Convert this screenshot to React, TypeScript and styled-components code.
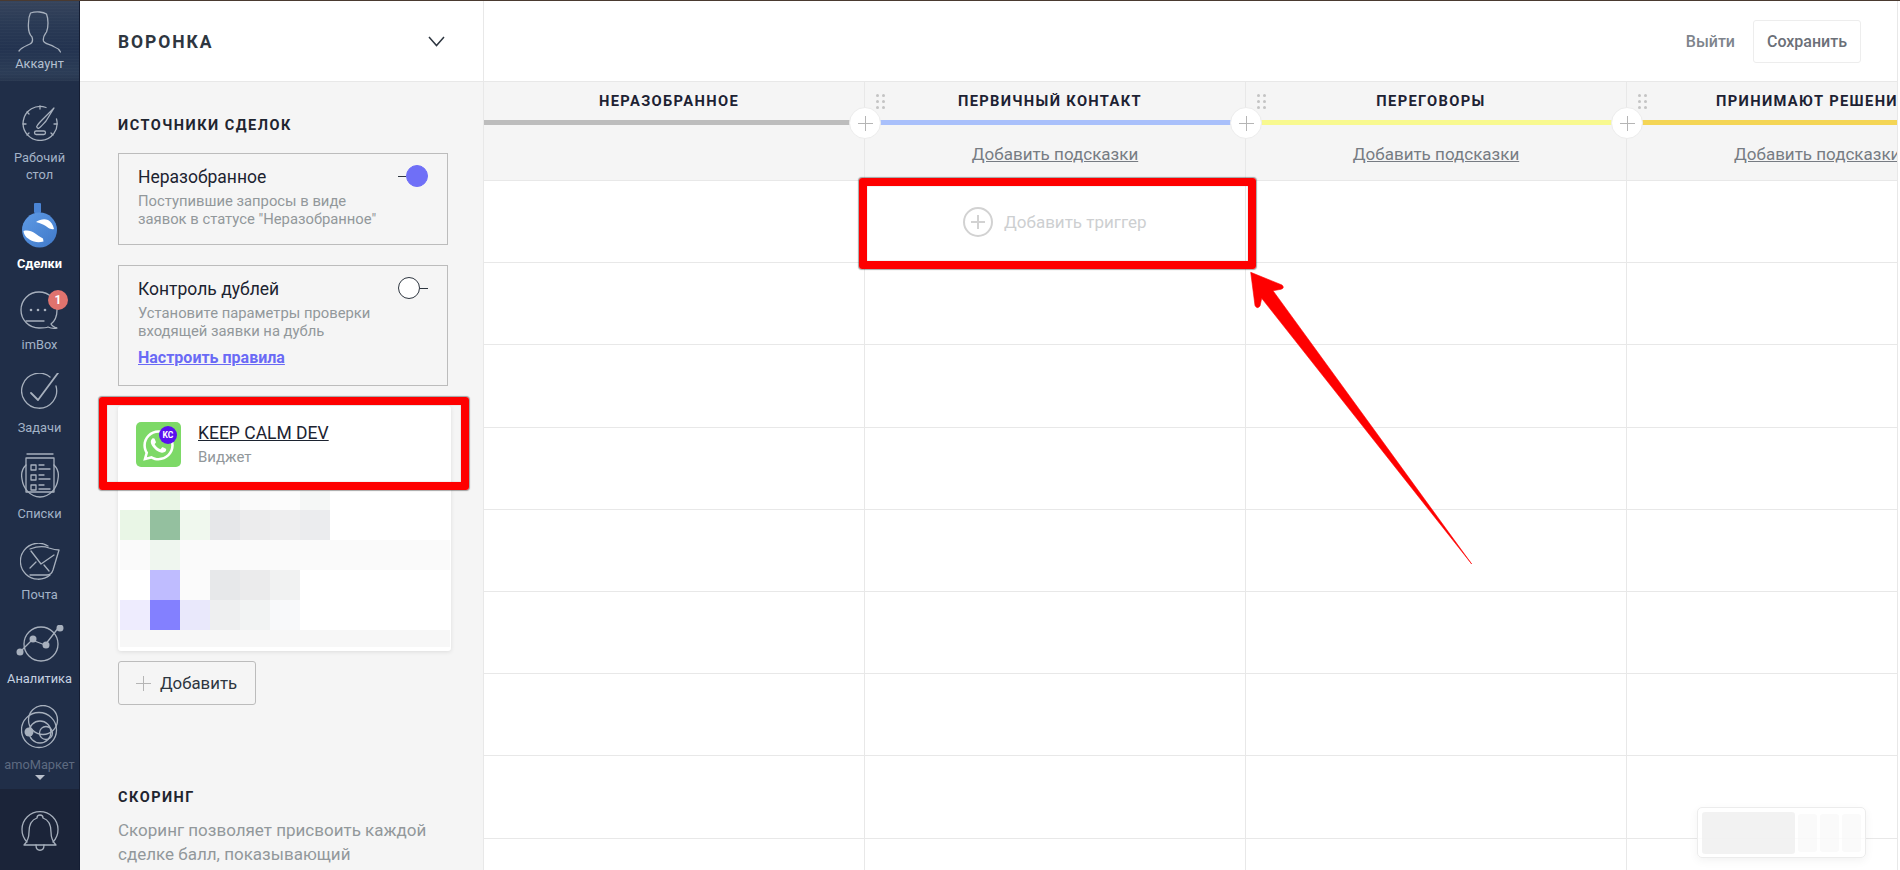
import styled, { createGlobalStyle } from 'styled-components';
import { FaWhatsapp } from 'react-icons/fa';

const FONT = `Roboto, "Noto Sans", "Liberation Sans", sans-serif`;

const GlobalStyle = createGlobalStyle`
  html, body {
    margin: 0;
    padding: 0;
    background: #fff;
  }
  body {
    font-family: ${FONT};
    width: 1900px;
    height: 870px;
    overflow: hidden;
  }
  * {
    box-sizing: border-box;
  }
`;

const Page = styled.div`
  position: relative;
  width: 1900px;
  height: 870px;
  overflow: hidden;
  display: flex;
  border-top: 1px solid #4a3a30;
`;

/* left nav */
const Sidebar = styled.nav`
  width: 80px;
  flex: none;
  display: flex;
  flex-direction: column;
  background: #202e48;
  border-right: 1px solid #141d33;
`;

const Account = styled.div`
  height: 80px;
  padding-top: 10px;
  display: flex;
  flex-direction: column;
  align-items: center;
  background:
    repeating-linear-gradient(0deg, rgba(255, 255, 255, 0.02) 0 1px, transparent 1px 3px),
    linear-gradient(#36445c 0, #2a3a55 28%, #233350 60%, #2c3d57 90%, #27364f 100%);
`;

const Nav = styled.div`
  flex: 1;
  padding-top: 24px;
  display: flex;
  flex-direction: column;
`;

const NavItem = styled.div<{ $h: number }>`
  position: relative;
  height: ${(p) => p.$h}px;
  display: flex;
  flex-direction: column;
  align-items: center;
`;

const NavLabel = styled.span<{ $gap: number; $active?: boolean; $tone?: string }>`
  margin-top: ${(p) => p.$gap}px;
  font-size: 12.8px;
  line-height: 17px;
  text-align: center;
  color: ${(p) => (p.$active ? '#fff' : p.$tone || '#a3b3c7')};
  font-weight: ${(p) => (p.$active ? 700 : 400)};
`;

const Badge = styled.span`
  position: absolute;
  left: 48px;
  top: -1px;
  width: 20px;
  height: 20px;
  border-radius: 50%;
  background: #e0736e;
  color: #fff;
  font-size: 12px;
  font-weight: 700;
  line-height: 20px;
  text-align: center;
`;

const MoreCaret = styled.span`
  width: 0;
  height: 0;
  margin-top: 2px;
  border-left: 5.5px solid transparent;
  border-right: 5.5px solid transparent;
  border-top: 5px solid #b9c0cc;
`;

const BellBox = styled.div`
  height: 81px;
  padding-top: 18px;
  display: flex;
  justify-content: center;
  background: #1b2439;
`;

/* settings panel */
const Panel = styled.aside`
  width: 404px;
  flex: none;
  background: #f5f5f5;
  border-right: 1px solid #e8e8e8;
  overflow: hidden;
`;

const PanelHead = styled.header`
  height: 81px;
  padding: 0 38px;
  display: flex;
  align-items: center;
  justify-content: space-between;
  background: #fff;
  border-bottom: 1px solid #e8e8e8;
`;

const PanelTitle = styled.h1`
  margin: 2px 0 0;
  font-size: 17.5px;
  font-weight: 700;
  letter-spacing: 1.9px;
  color: #2e3640;
`;

const PanelBody = styled.div`
  padding: 34px 32px 0 38px;
`;

const SectionTitle = styled.h2`
  margin: 0;
  font-size: 14.5px;
  line-height: 20px;
  font-weight: 700;
  letter-spacing: 1.5px;
  color: #1f2530;
`;

const SourceCard = styled.section<{ $h: number; $mt: number }>`
  position: relative;
  width: 330px;
  height: ${(p) => p.$h}px;
  margin-top: ${(p) => p.$mt}px;
  padding: 11px 19px;
  border: 1px solid #bcbcbc;
`;

const CardTitle = styled.div`
  font-size: 17.5px;
  line-height: 24px;
  color: #1c2330;
`;

const CardText = styled.p`
  margin: 4px 0 0;
  font-size: 14.8px;
  line-height: 17.5px;
  color: #92989b;
`;

const RuleLink = styled.a`
  display: block;
  margin-top: 8px;
  font-size: 16px;
  line-height: 20px;
  font-weight: 700;
  color: #6a6af5;
  text-decoration: underline;
`;

const Toggle = styled.span<{ $on?: boolean }>`
  position: absolute;
  top: 12px;
  right: 19px;
  width: 30px;
  height: 20px;
  display: flex;
  flex-direction: ${(p) => (p.$on ? 'row' : 'row-reverse')};
  align-items: center;
  &::before {
    content: '';
    flex: 1;
    height: 1px;
    background: #2e3640;
  }
  &::after {
    content: '';
    width: 20px;
    height: 20px;
    border-radius: 50%;
    background: ${(p) => (p.$on ? '#6f6ff7' : '#fff')};
    border: 1px solid ${(p) => (p.$on ? '#6f6ff7' : '#2e3640')};
  }
`;

const WidgetCard = styled.div`
  width: 333px;
  margin-top: 20px;
  background: #fff;
  border-radius: 3px;
  box-shadow: 0 1px 4px rgba(0, 0, 0, 0.1);
`;

const WidgetRow = styled.div`
  height: 85px;
  padding: 16px 18px;
  display: flex;
  gap: 17px;
`;

const WidgetIcon = styled.div`
  position: relative;
  width: 45px;
  height: 45px;
  flex: none;
  padding-top: 2px;
  border-radius: 5px;
  background: #7dd967;
  display: flex;
  align-items: center;
  justify-content: center;
  color: #fff;
`;

const KcBadge = styled.span`
  position: absolute;
  top: 4px;
  right: 4px;
  width: 18px;
  height: 18px;
  border-radius: 50%;
  background: #5a10f0;
  color: #fff;
  font-size: 8.5px;
  font-weight: 700;
  line-height: 18px;
  text-align: center;
`;

const WidgetName = styled.a`
  display: block;
  margin-top: 0;
  font-size: 17.5px;
  line-height: 22px;
  color: #1c2330;
  text-decoration: underline;
`;

const WidgetKind = styled.div`
  margin-top: 4px;
  font-size: 15px;
  line-height: 18px;
  color: #92989b;
`;

const Mosaic = styled.div`
  padding: 0 1px 4px 2px;
  display: flex;
  flex-direction: column;
`;

const MosaicRow = styled.div<{ $h: number; $bg?: string }>`
  height: ${(p) => p.$h}px;
  display: flex;
  background: ${(p) => p.$bg || '#fff'};
`;

const Tile = styled.span<{ $c: string }>`
  width: 30px;
  flex: none;
  background: ${(p) => p.$c};
`;

const AddButton = styled.button`
  width: 138px;
  height: 44px;
  margin-top: 10px;
  padding: 0 0 0 17px;
  display: flex;
  align-items: center;
  gap: 9px;
  background: transparent;
  border: 1px solid #bcbcbc;
  border-radius: 3px;
  font-family: ${FONT};
  font-size: 16.8px;
  color: #2e3640;
`;

const ScoringTitle = styled(SectionTitle)`
  margin-top: 83px;
`;

const ScoringText = styled.p`
  margin: 10px 0 0;
  font-size: 17px;
  line-height: 24px;
  color: #92989b;
`;

/* pipeline board */
const Main = styled.main`
  width: 1414px;
  flex: none;
  overflow: hidden;
  border-right: 1px solid #e8e8e8;
`;

const TopBar = styled.header`
  height: 81px;
  padding: 0 36px 0 0;
  display: flex;
  align-items: center;
  justify-content: flex-end;
  gap: 18px;
  border-bottom: 1px solid #e8e8e8;
`;

const ExitLink = styled.span`
  font-size: 16px;
  font-weight: 500;
  color: #7e848c;
`;

const SaveButton = styled.button`
  width: 108px;
  height: 43px;
  background: #fff;
  border: 1px solid #ededed;
  border-radius: 3px;
  font-family: ${FONT};
  font-size: 16px;
  font-weight: 500;
  color: #6b7078;
`;

const Board = styled.div`
  display: grid;
  grid-template-columns: 380px 381px 381px 272px;
`;

const Column = styled.div<{ $first?: boolean }>`
  position: relative;
  min-width: 0;
  border-left: ${(p) => (p.$first ? 'none' : '1px solid #e8e8e8')};
`;

const StageHead = styled.div`
  position: relative;
  height: 99px;
  background: #f5f5f5;
  border-bottom: 1px solid #e8e8e8;
`;

const StageTitle = styled.div<{ $clip?: boolean }>`
  height: 38px;
  padding-right: 10px;
  line-height: 38px;
  font-size: 14.7px;
  font-weight: 700;
  letter-spacing: 1.35px;
  color: #1d2233;
  text-align: center;
  white-space: nowrap;
  ${(p) => p.$clip && 'text-align: left; padding-left: 89px; padding-right: 0; overflow: hidden;'}
`;

const StageBar = styled.div<{ $c: string }>`
  height: 5px;
  background: ${(p) => p.$c};
`;

const HintLink = styled.a<{ $clip?: boolean }>`
  display: block;
  margin-top: 18px;
  font-size: 17px;
  line-height: 22px;
  color: #777c83;
  text-align: center;
  white-space: nowrap;
  overflow: hidden;
  ${(p) => p.$clip && 'text-align: left; padding-left: 107px;'}
  span {
    text-decoration: underline;
  }
`;

const DragDots = styled.div`
  position: absolute;
  left: 11px;
  top: 12px;
  display: grid;
  grid-template-columns: 3px 3px;
  gap: 3px;
  i {
    width: 3px;
    height: 3px;
    border-radius: 50%;
    background: #c4c4c4;
  }
`;

const InsertStage = styled.button`
  position: absolute;
  left: -16px;
  top: 25px;
  z-index: 2;
  width: 32px;
  height: 32px;
  padding: 0;
  display: flex;
  align-items: center;
  justify-content: center;
  border-radius: 50%;
  border: 1px solid #ececec;
  background: #fff;
`;

const Row = styled.div`
  height: 82.2px;
  border-bottom: 1px solid #e8e8e8;
`;

const TriggerRow = styled(Row)`
  display: flex;
  align-items: center;
  gap: 11px;
  padding-left: 98px;
  font-size: 17px;
  color: #cdcfd1;
`;

const TriggerPlus = styled.span`
  width: 30px;
  height: 30px;
  flex: none;
  display: flex;
  align-items: center;
  justify-content: center;
  border: 2px solid #d2d2d2;
  border-radius: 50%;
`;

/* screenshot annotations */
const RedFrame = styled.div<{ $x: number; $y: number; $w: number; $h: number }>`
  position: absolute;
  left: ${(p) => p.$x}px;
  top: ${(p) => p.$y}px;
  width: ${(p) => p.$w}px;
  height: ${(p) => p.$h}px;
  border: 8px solid #fe0000;
  border-radius: 3px;
  box-shadow: 0 0 1px 1px rgba(60, 60, 60, 0.45), inset 0 0 1px rgba(60, 60, 60, 0.6);
  z-index: 5;
`;

const Arrow = styled.svg`
  position: absolute;
  left: 0;
  top: 0;
  z-index: 5;
  pointer-events: none;
`;

const FloatBar = styled.div`
  position: absolute;
  left: 1697px;
  top: 806px;
  width: 169px;
  height: 51px;
  padding: 4px;
  display: flex;
  align-items: center;
  gap: 3px;
  background: rgba(255, 255, 255, 0.82);
  border: 1px solid #ececec;
  border-radius: 5px;
  box-shadow: 0 3px 10px rgba(0, 0, 0, 0.05);
  z-index: 4;
`;

const FloatWide = styled.span`
  width: 94px;
  height: 42px;
  border-radius: 3px;
  background: rgba(238, 238, 238, 0.75);
`;

const FloatCell = styled.span`
  width: 19px;
  height: 38px;
  border-radius: 3px;
  background: rgba(245, 245, 245, 0.5);
`;

const ICON = { fill: 'none', stroke: '#a7b0bd', strokeWidth: 1.3, strokeLinecap: 'round', strokeLinejoin: 'round' } as const;

const AccountIcon = () => (
  <svg width="46" height="42" viewBox="0 0 46 42" {...ICON}>
    <path d="M2 40c3-4 7-5 11-7 3-1.500 3-4 2-7-3-3-4-8-3.500-14 0-4 1-8 2-10 6-2 13-1 16 1 2 5 2 13 0 18-2 3-4 5-3 9 1 3 6 3 11 6 3 1 5 3 6 5" />
  </svg>
);

const DashboardIcon = () => (
  <svg width="36" height="36" viewBox="0 0 36 36" {...ICON}>
    <path d="M24 2.500A17 17 0 1 0 34.500 14" />
    <path d="M18 1v3M5 7l2 2M1 19h3M32 19h3M5 30l2-2M31 30l-2-2" />
    <path d="M32 3 21 14c-2 2-5 5-6 7-1 1 1 3 2 2 2-1 5-5 7-7z" />
    <rect x="12.500" y="26" width="11" height="3.500" rx="1.700" />
  </svg>
);

const DealsIcon = () => (
  <svg width="36" height="46" viewBox="0 0 36 46">
    <defs>
      <linearGradient id="bag" x1="0" y1="0" x2="1" y2="1">
        <stop offset="0" stopColor="#5f9be6" />
        <stop offset="1" stopColor="#3f78c8" />
      </linearGradient>
    </defs>
    <rect x="12" y="0" width="7" height="10" rx="1" fill="#4a84d4" />
    <circle cx="17.500" cy="27" r="17.500" fill="url(#bag)" />
    <path d="M14 19C18 16.500 22 15.500 26 17c3 1.500 5 4.500 6 9-2 .5-4 0-5.500-1-2-1.500-3.500-2.500-5.500-3.500-2.500-1-5-2-7-2.500z" fill="#fff" />
    <path d="M1.500 28C6 27 9.500 28 12.500 30c3 2 5.500 4 8.500 5.500l.5 3C18 39.500 15 39.500 12 38.500 6 36.500 2 33 1.500 28z" fill="#fff" />
  </svg>
);

const ChatIcon = () => (
  <svg width="40" height="40" viewBox="0 0 40 40" {...ICON}>
    <path d="M31 33c4-3 6-8 6-14C37 9 29 1 19 1S1 9 1 19s8 18 18 18c3 0 7 0 9-1 2 1 5 2 9 1-3-1-5-2-6-4z" />
    <path d="M6 30h18" />
    <circle cx="11" cy="19" r="1.300" fill="#a7b0bd" stroke="none" />
    <circle cx="18" cy="19" r="1.300" fill="#a7b0bd" stroke="none" />
    <circle cx="25" cy="19" r="1.300" fill="#a7b0bd" stroke="none" />
  </svg>
);

const TaskIcon = () => (
  <svg width="38" height="38" viewBox="0 0 38 38" {...ICON}>
    <path d="M29 4a17.500 17.500 0 1 0 6 9" />
    <path d="M10 20l7 7L37 0" strokeWidth="1.800" />
  </svg>
);

const ListIcon = () => (
  <svg width="38" height="46" viewBox="0 0 38 46" {...ICON}>
    <path d="M6 1h26" />
    <path d="M5 12C1 16 0 21 1 26c1 9 8 18 18 18s17-9 18-18c1-5 0-10-4-14" />
    <path d="M5 5h28v34H5z" />
    <rect x="10" y="12" width="5" height="5" />
    <rect x="10" y="22" width="5" height="5" />
    <rect x="10" y="32" width="5" height="5" />
    <path d="M18 12h5M18 16h11M18 22h5M18 26h11M18 32h5M18 36h11" />
  </svg>
);

const MailIcon = () => (
  <svg width="40" height="37" viewBox="0 0 40 37" {...ICON}>
    <path d="M28 3a18 18 0 1 0 2 29" />
    <path d="M10 6c8-3 14-3 19-1 3 1 7 2 10 2L33 27c-1 3-3 5-6 5H10" />
    <path d="M11 8l10 13L34 12" />
    <path d="M10 25l6-6M29 28l-5-6" />
  </svg>
);

const ChartIcon = () => (
  <svg width="48" height="38" viewBox="0 0 48 38" {...ICON}>
    <circle cx="25" cy="19" r="17" />
    <path d="M4 27l12-12 13 5 14-18" />
    <circle cx="4" cy="27" r="3.500" fill="#a7b0bd" stroke="none" />
    <circle cx="17" cy="14" r="3.500" fill="#a7b0bd" stroke="none" />
    <circle cx="30" cy="20" r="3.500" fill="#a7b0bd" stroke="none" />
    <circle cx="44" cy="3" r="3.500" fill="#a7b0bd" stroke="none" />
  </svg>
);

const MarketIcon = () => (
  <svg width="38" height="44" viewBox="0 0 38 44" {...ICON}>
    <circle cx="22" cy="15" r="14.500" />
    <circle cx="18" cy="25" r="17.500" />
    <circle cx="19" cy="27" r="11" />
    <circle cx="25" cy="28" r="6.500" />
    <circle cx="8" cy="27" r="4.500" fill="#a7b0bd" stroke="none" />
  </svg>
);

const BellIcon = () => (
  <svg width="38" height="46" viewBox="0 0 38 46" {...ICON}>
    <path d="M6 35a18 18 0 1 1 26 0" />
    <path d="M19 8a3 3 0 0 1 3 3c6 2 8 7 8 14 0 5 2 10 5 13H3c3-3 5-8 5-13 0-7 2-12 8-14a3 3 0 0 1 3-3z" />
    <path d="M15 38c0 7 8 7 8 0" />
  </svg>
);

const PlusMark = ({ size, color, width = 1 }: { size: number; color: string; width?: number }) => (
  <svg width={size} height={size} viewBox={`0 0 ${size} ${size}`}>
    <path d={`M${size / 2} 0V${size}M0 ${size / 2}H${size}`} stroke={color} strokeWidth={width} />
  </svg>
);

const W = '#fff';
const mosaicRows: { h: number; bg?: string; tiles: string[] }[] = [
  { h: 19, tiles: [W, '#e9f5e6', W, '#f5f6f6', '#fafafa', '#fcfcfc', '#f5f7f6'] },
  { h: 30, tiles: ['#e9f6e6', '#94c09f', '#f0f8ee', '#e6e7e9', '#ececed', '#eeeeef', '#ebecee'] },
  { h: 30, bg: '#fafafa', tiles: ['#fafafa', '#eff6ef'] },
  { h: 30, tiles: [W, '#bfbcff', '#fbfbfb', '#e7e8ea', '#ebebec', '#f1f2f2'] },
  { h: 30, tiles: ['#eeecfe', '#8380ff', '#e9e8fb', '#eeeff0', '#f2f3f3', '#f8f9fa'] },
  { h: 17, bg: '#f7f7f7', tiles: [] }
];

const stages = [
  { title: 'НЕРАЗОБРАННОЕ', color: '#bdbdbd', hints: false },
  { title: 'ПЕРВИЧНЫЙ КОНТАКТ', color: '#a9c0fb', hints: true },
  { title: 'ПЕРЕГОВОРЫ', color: '#f8f98f', hints: true },
  { title: 'ПРИНИМАЮТ РЕШЕНИЕ', color: '#f4d555', hints: true, clip: true }
];

const rowCount = [0, 1, 2, 3, 4, 5, 6, 7, 8];

const App = () => (
  <>
    <GlobalStyle />
    <Page>
      <Sidebar>
        <Account>
          <AccountIcon />
          <NavLabel $gap={2} $tone="#b4c0d0">Аккаунт</NavLabel>
        </Account>
        <Nav>
          <NavItem $h={98}>
            <DashboardIcon />
            <NavLabel $gap={8}>Рабочий<br />стол</NavLabel>
          </NavItem>
          <NavItem $h={88}>
            <DealsIcon />
            <NavLabel $gap={6} $active>Сделки</NavLabel>
          </NavItem>
          <NavItem $h={82}>
            <ChatIcon />
            <Badge>1</Badge>
            <NavLabel $gap={5}>imBox</NavLabel>
          </NavItem>
          <NavItem $h={80}>
            <TaskIcon />
            <NavLabel $gap={8}>Задачи</NavLabel>
          </NavItem>
          <NavItem $h={90}>
            <ListIcon />
            <NavLabel $gap={6}>Списки</NavLabel>
          </NavItem>
          <NavItem $h={82}>
            <MailIcon />
            <NavLabel $gap={6}>Почта</NavLabel>
          </NavItem>
          <NavItem $h={80}>
            <ChartIcon />
            <NavLabel $gap={7} $tone="#c6d2e2">Аналитика</NavLabel>
          </NavItem>
          <NavItem $h={84}>
            <MarketIcon />
            <NavLabel $gap={7} $tone="#5d6a80">amoМаркет</NavLabel>
            <MoreCaret />
          </NavItem>
        </Nav>
        <BellBox>
          <BellIcon />
        </BellBox>
      </Sidebar>

      <Panel>
        <PanelHead>
          <PanelTitle>ВОРОНКА</PanelTitle>
          <svg width="17" height="11" viewBox="0 0 17 11" fill="none" stroke="#2e3640" strokeWidth="1.500">
            <path d="M1 1l7.500 8.500L16 1" />
          </svg>
        </PanelHead>
        <PanelBody>
          <SectionTitle>ИСТОЧНИКИ СДЕЛОК</SectionTitle>
          <SourceCard $h={92} $mt={17}>
            <CardTitle>Неразобранное</CardTitle>
            <CardText>
              Поступившие запросы в виде
              <br />
              заявок в статусе "Неразобранное"
            </CardText>
            <Toggle $on />
          </SourceCard>
          <SourceCard $h={121} $mt={20}>
            <CardTitle>Контроль дублей</CardTitle>
            <CardText>
              Установите параметры проверки
              <br />
              входящей заявки на дубль
            </CardText>
            <RuleLink>Настроить правила</RuleLink>
            <Toggle />
          </SourceCard>
          <WidgetCard>
            <WidgetRow>
              <WidgetIcon>
                <FaWhatsapp size={35} />
                <KcBadge>KC</KcBadge>
              </WidgetIcon>
              <div>
                <WidgetName>KEEP CALM DEV</WidgetName>
                <WidgetKind>Виджет</WidgetKind>
              </div>
            </WidgetRow>
            <Mosaic>
              {mosaicRows.map((row, i) => (
                <MosaicRow key={i} $h={row.h} $bg={row.bg}>
                  {row.tiles.map((c, j) => (
                    <Tile key={j} $c={c} />
                  ))}
                </MosaicRow>
              ))}
            </Mosaic>
          </WidgetCard>
          <AddButton>
            <PlusMark size={15} color="#b5b5b5" />
            Добавить
          </AddButton>
          <ScoringTitle>СКОРИНГ</ScoringTitle>
          <ScoringText>
            Скоринг позволяет присвоить каждой
            <br />
            сделке балл, показывающий
          </ScoringText>
        </PanelBody>
      </Panel>

      <Main>
        <TopBar>
          <ExitLink>Выйти</ExitLink>
          <SaveButton>Сохранить</SaveButton>
        </TopBar>
        <Board>
          {stages.map((stage, i) => (
            <Column key={stage.title} $first={i === 0}>
              <StageHead>
                {i > 0 && (
                  <DragDots>
                    <i /><i /><i /><i /><i /><i />
                  </DragDots>
                )}
                <StageTitle $clip={stage.clip}>{stage.title}</StageTitle>
                <StageBar $c={stage.color} />
                {stage.hints && (
                  <HintLink $clip={stage.clip}>
                    <span>Добавить подсказки</span>
                  </HintLink>
                )}
                {i > 0 && (
                  <InsertStage>
                    <PlusMark size={15} color="#b5b5b5" />
                  </InsertStage>
                )}
              </StageHead>
              {rowCount.map((r) =>
                i === 1 && r === 0 ? (
                  <TriggerRow key={r}>
                    <TriggerPlus>
                      <PlusMark size={14} color="#d2d2d2" width={2} />
                    </TriggerPlus>
                    Добавить триггер
                  </TriggerRow>
                ) : (
                  <Row key={r} />
                )
              )}
            </Column>
          ))}
        </Board>
      </Main>

      <FloatBar>
        <FloatWide />
        <FloatCell />
        <FloatCell />
        <FloatCell />
      </FloatBar>

      <RedFrame $x={99} $y={396} $w={370} $h={93} />
      <RedFrame $x={859} $y={177} $w={397} $h={91} />
      <Arrow width="1900" height="870" viewBox="0 0 1900 870">
        <path
          d="M1250.700 271.300 L1282 284 Q1285 287 1281 288.300 L1273 289.700 L1471.700 563 L1261.700 297.300 L1260 305 Q1257 308.500 1255 304.500 Z"
          fill="#fe0000"
          stroke="#fe0000"
          strokeWidth="0.600"
          strokeLinejoin="round"
        />
      </Arrow>
    </Page>
  </>
);

export default App;
